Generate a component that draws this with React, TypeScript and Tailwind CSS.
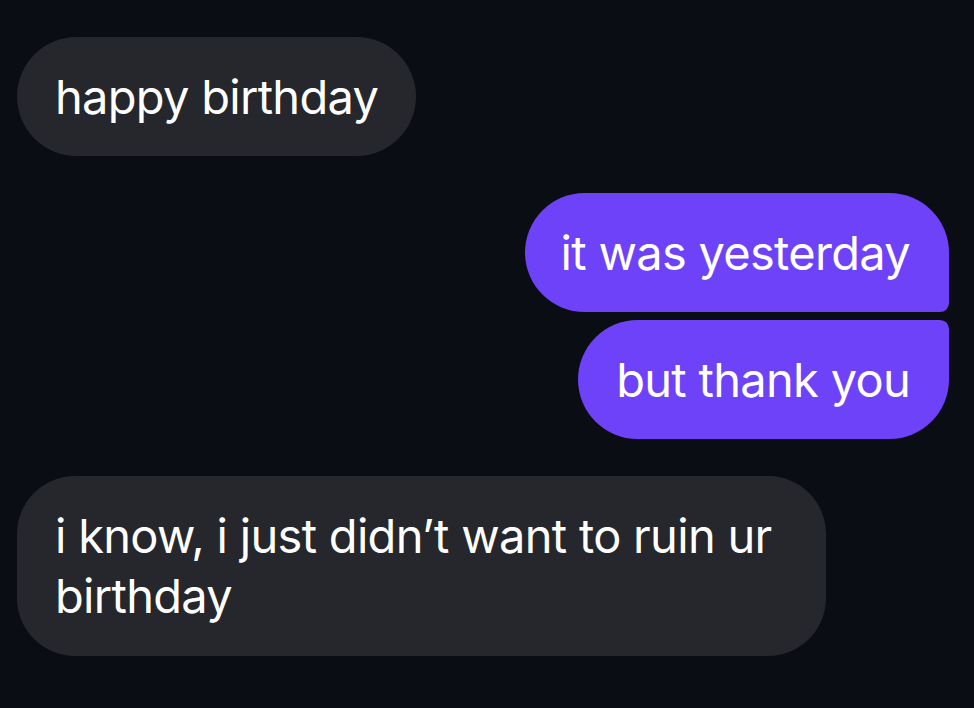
import React from "react";

export default function App() {
  const font = { fontFamily: "Inter, 'Noto Sans', sans-serif" } as React.CSSProperties;
  return (
    <div className="w-[974px] h-[708px] bg-[#0b0d14] overflow-hidden" style={font}>
      <div className="flex flex-col pt-[37px] pl-[17px] pr-[25px] text-white text-[47px] leading-[59px] tracking-[-0.015em]">
        <div className="self-start bg-[#25272c] rounded-[60px] pl-[38px] pr-[38px] py-[30px]">
          happy birthday
        </div>
        <div className="self-end mt-[37px] bg-[#6e42f8] rounded-[60px] rounded-br-[9px] pl-[36px] pr-[39px] py-[30px]">
          it was yesterday
        </div>
        <div className="self-end mt-[8px] bg-[#6e42f8] rounded-[60px] rounded-tr-[9px] pl-[38px] pr-[39px] py-[30px]">
          but thank you
        </div>
        <div className="self-start mt-[37px] w-[809px] bg-[#25272c] rounded-[58px] pl-[38px] pr-[38px] py-[30px] leading-[60px]">
          i know, i just didn’t want to ruin ur birthday
        </div>
      </div>
    </div>
  );
}
